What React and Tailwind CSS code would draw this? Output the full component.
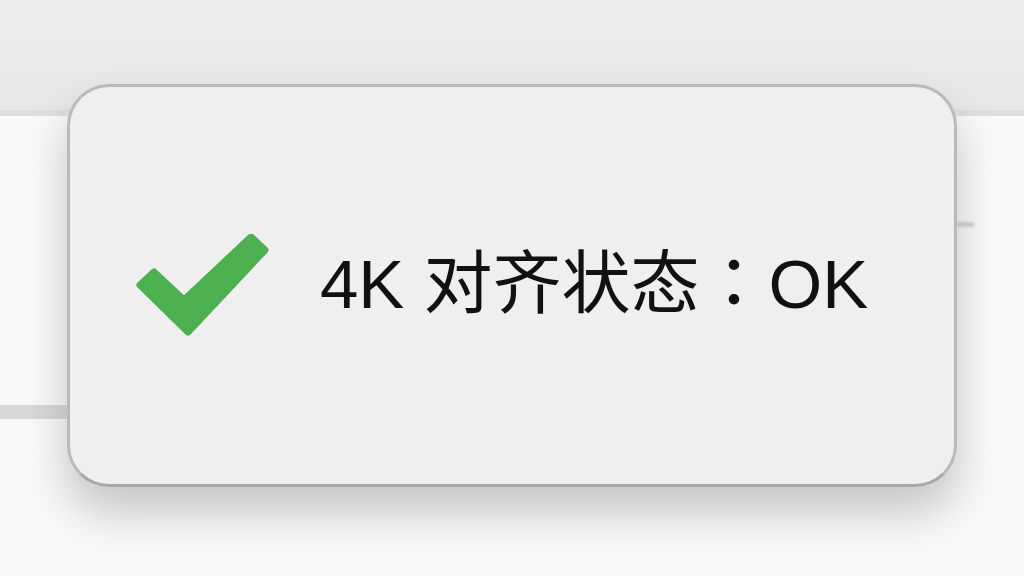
import React from 'react';

const CheckMark = () => (
  <svg width="136" height="104" viewBox="0 0 136 104" className="shrink-0">
    <polygon
      points="5,51 19,38 49,66 116,3 130,16 53,98"
      fill="#4cb050"
      stroke="#4cb050"
      strokeWidth="7"
      strokeLinejoin="round"
    />
  </svg>
);

const App = () => {
  return (
    <div className="relative w-[1024px] h-[576px] overflow-hidden bg-[#f8f8f8]">
      {/* page behind the dialog */}
      <div className="h-[116px] bg-gradient-to-b from-[#ececec] to-[#e7e7e7] border-b-[6px] border-[#dedede]" />
      <div className="flex flex-col">
        <div className="mt-[106px] ml-auto mr-[50px] h-[5px] w-[22px] bg-[#d4d4d4] blur-[1px]" />
        <div className="mt-[178px] h-[14px] w-[80px] bg-[#d8d8d8]" />
      </div>

      {/* dialog */}
      <div className="absolute left-[67px] top-[84px] w-[890px] h-[403px] rounded-[42px] border-[3px] border-[#bababa] border-b-[#a9a9a9] bg-[#efefef] shadow-[0_26px_44px_rgba(0,0,0,0.2)] flex items-center pl-[65px] gap-[49px]">
        <CheckMark />
        <div
          className="text-[69px] leading-none text-[#111111] whitespace-nowrap mb-[8px]"
          style={{ fontFamily: '"Liberation Sans", "Noto Sans CJK SC", sans-serif' }}
        >
          4K 对齐状态<span style={{ fontFamily: '"Noto Sans CJK TC", sans-serif' }}>：</span>OK
        </div>
      </div>
    </div>
  );
};

export default App;
